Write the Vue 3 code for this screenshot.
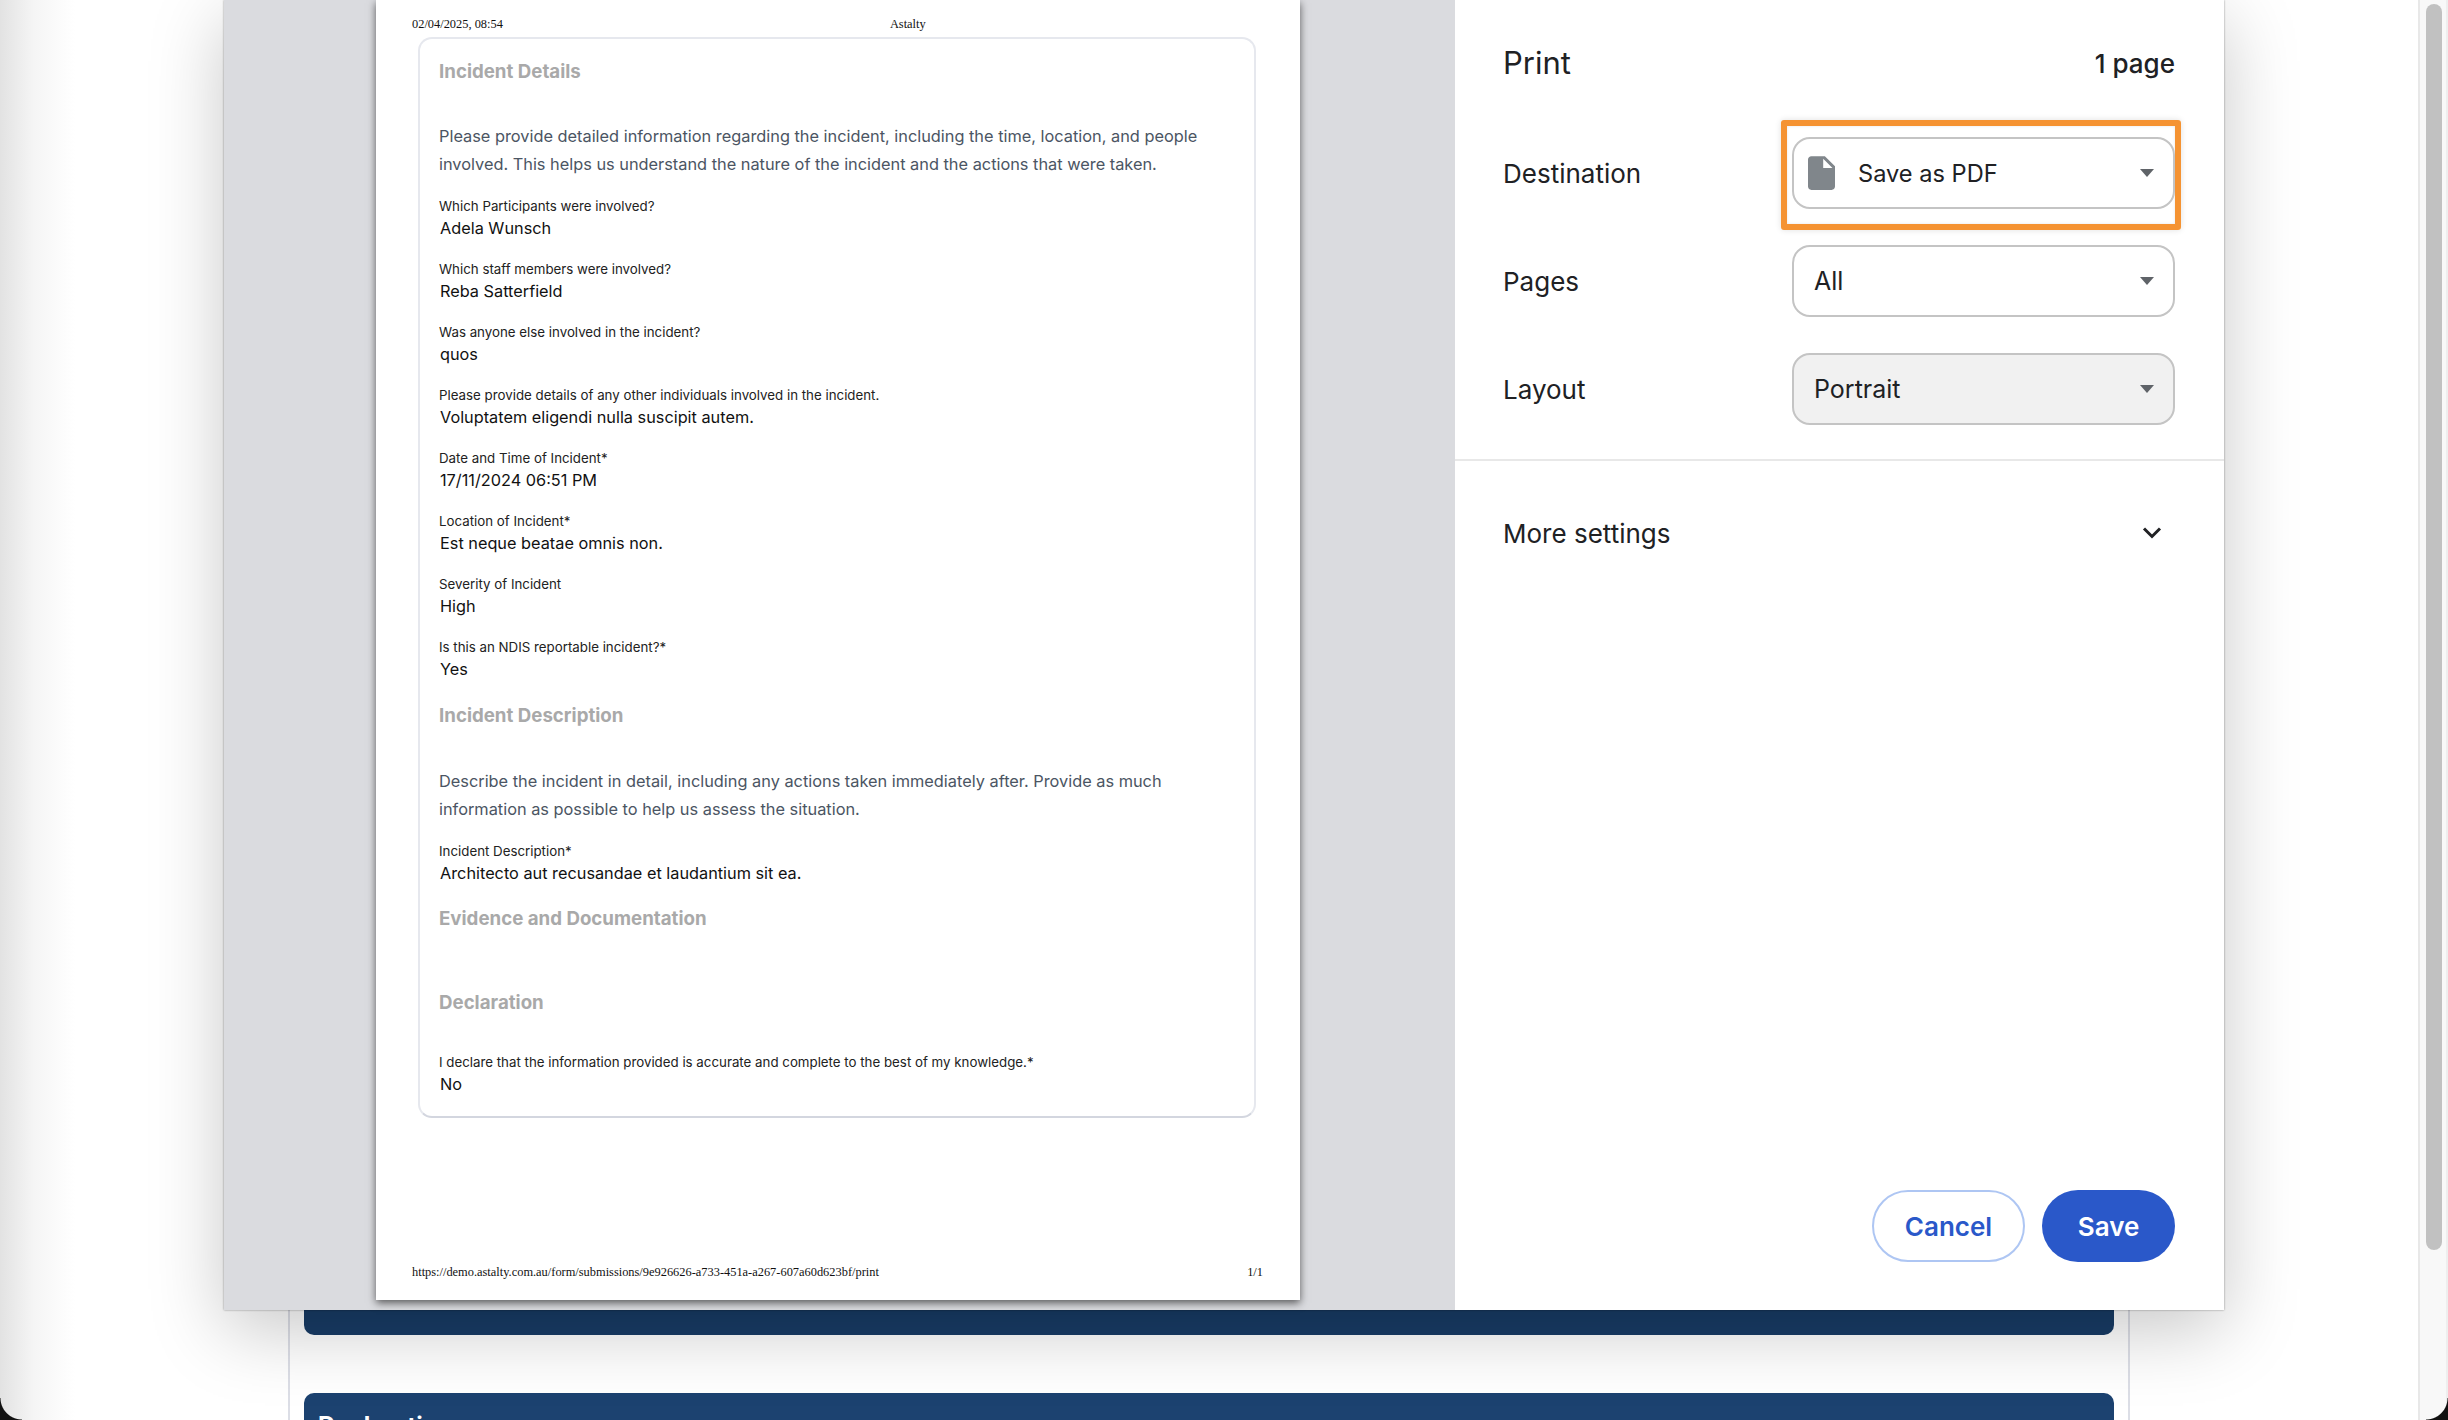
<script setup>
const intro = ['Please provide detailed information regarding the incident, including the time, location, and people', 'involved. This helps us understand the nature of the incident and the actions that were taken.']
const fields = [
  ['Which Participants were involved?', 'Adela Wunsch'],
  ['Which staff members were involved?', 'Reba Satterfield'],
  ['Was anyone else involved in the incident?', 'quos'],
  ['Please provide details of any other individuals involved in the incident.', 'Voluptatem eligendi nulla suscipit autem.'],
  ['Date and Time of Incident*', '17/11/2024 06:51 PM'],
  ['Location of Incident*', 'Est neque beatae omnis non.'],
  ['Severity of Incident', 'High'],
  ['Is this an NDIS reportable incident?*', 'Yes']
]
const settings = [
  { label: 'Pages', value: 'All', cls: '' },
  { label: 'Layout', value: 'Portrait', cls: 'disabled' }
]
</script>

<template>
  <div class="window">
    <div class="backdrop">
      <div class="frame">
        <div class="bar bar-one">Evidence and Documentation</div>
        <div class="bar bar-two">Declaration</div>
      </div>
    </div>
    <div class="edge-shade"></div>

    <div class="dialog">
      <div class="preview">
        <div class="paper">
          <div class="paper-head"><span>02/04/2025, 08:54</span><span class="paper-title">Astalty</span></div>
          <div class="card">
            <h3 class="heading">Incident Details</h3>
            <p class="para para-first"><span v-for="l in intro" :key="l" class="line">{{ l }}</span></p>
            <div v-for="f in fields" :key="f[0]" class="field">
              <div class="label">{{ f[0] }}</div>
              <div class="value">{{ f[1] }}</div>
            </div>
            <h3 class="heading heading-desc">Incident Description</h3>
            <p class="para para-desc"><span class="line">Describe the incident in detail, including any actions taken immediately after. Provide as much</span><span class="line">information as possible to help us assess the situation.</span></p>
            <div class="field field-desc">
              <div class="label">Incident Description*</div>
              <div class="value">Architecto aut recusandae et laudantium sit ea.</div>
            </div>
            <h3 class="heading">Evidence and Documentation</h3>
            <h3 class="heading heading-gap">Declaration</h3>
            <div class="field field-last">
              <div class="label">I declare that the information provided is accurate and complete to the best of my knowledge.*</div>
              <div class="value">No</div>
            </div>
          </div>
          <div class="paper-foot"><span>https://demo.astalty.com.au/form/submissions/9e926626-a733-451a-a267-607a60d623bf/print</span><span>1/1</span></div>
        </div>
      </div>

      <aside class="panel">
        <div class="panel-top">
          <div class="title-row"><span class="title">Print</span><span class="count">1 page</span></div>
          <div class="row row-dest">
            <span class="row-label">Destination</span>
            <div class="highlight">
              <div class="select">
                <svg class="doc" viewBox="4 2 16 20" width="27" height="34"><path fill-rule="evenodd" d="M6 2c-1.1 0-2 .9-2 2v16c0 1.1.9 2 2 2h12c1.1 0 2-.9 2-2V8l-6-6H6zm7 7V3.5L18.5 9H13z" fill="#80868b"/></svg>
                <span class="select-text">Save as PDF</span>
                <span class="caret"></span>
              </div>
            </div>
          </div>
          <div v-for="s in settings" :key="s.label" class="row">
            <span class="row-label">{{ s.label }}</span>
            <div class="select" :class="s.cls">
              <span class="select-plain">{{ s.value }}</span>
              <span class="caret"></span>
            </div>
          </div>
        </div>
        <div class="more">
          <span class="row-label">More settings</span>
          <svg width="20" height="14" viewBox="0 0 20 14"><path d="M2 2.5l8 8 8-8" fill="none" stroke="#202124" stroke-width="3"/></svg>
        </div>
        <div class="actions">
          <button class="btn btn-cancel">Cancel</button>
          <button class="btn btn-save">Save</button>
        </div>
      </aside>
    </div>

    <div class="scrollbar"><div class="thumb"></div></div>
    <div class="corner corner-l"></div>
    <div class="corner corner-r"></div>
  </div>
</template>

<style>
html, body { margin: 0; background: #fff; }
</style>

<style scoped>
.window { position: relative; width: 2448px; height: 1420px; overflow: hidden; background: #fff; font-family: Inter, "Liberation Sans", sans-serif; }
.backdrop { height: 100%; padding-left: 288px; box-sizing: border-box; }
.frame { width: 1842px; height: 100%; box-sizing: border-box; border-left: 2px solid #dcdee6; border-right: 2px solid #dcdee6; padding: 1200px 14px 0; }
.bar { color: #fff; font-weight: 700; font-size: 24px; padding-left: 14px; overflow: hidden; box-sizing: border-box; white-space: nowrap; }
.bar-one { height: 135px; background: #183c66; padding-top: 83px; border-radius: 0 0 10px 10px; }
.bar-two { height: 60px; margin-top: 58px; background: #1c4270; padding-top: 18px; border-radius: 10px 10px 0 0; }
.edge-shade { position: absolute; left: 0; top: 0; bottom: 0; width: 75px; background: linear-gradient(90deg, #e2e2e2, #f5f5f5 45%, #fff); }

.dialog { position: absolute; left: 224px; top: 0; width: 2000px; height: 1310px; display: flex; box-shadow: 0 0 2px rgba(0,0,0,.4), 0 20px 70px rgba(0,0,0,.22); }
.preview { width: 1231px; background: #dadbdf; padding-left: 152px; box-sizing: border-box; }
.paper { width: 924px; height: 1300px; background: #fff; box-shadow: 0 3px 8px rgba(0,0,0,.6); display: flex; flex-direction: column; padding: 0 37px 0 36px; box-sizing: border-box; position: relative; }
.paper-head { display: flex; height: 37px; align-items: center; padding-top: 11px; box-sizing: border-box; font: 12.4px/1 "Liberation Serif", serif; color: #111; }
.paper-title { margin-left: 387px; }
.paper-foot { margin-top: auto; margin-bottom: 21px; display: flex; justify-content: space-between; font: 12.4px/14px "Liberation Serif", serif; color: #111; }
.card { margin-left: 6px; width: 838px; height: 1081px; box-sizing: border-box; border: 2px solid #e6e8ee; border-bottom-color: #d3d6df; border-radius: 14px; padding: 19px 19px 0; }
.heading { margin: 0; font-size: 18.7px; line-height: 28px; font-weight: 700; color: #a9a9a9; white-space: nowrap; }
.heading-desc { margin-top: 22px; }
.heading-gap { margin-top: 56px; }
.para { margin: 36px 0 17px; font-size: 16.33px; line-height: 28px; color: #4b5563; }
.para-desc { margin-top: 36.5px; }
.line { display: block; white-space: nowrap; }
.field { margin-bottom: 19px; }
.field-desc { margin-bottom: 21px; }
.field-last { margin-top: 34.5px; margin-bottom: 0; }
.label { font-size: 13.3px; line-height: 22px; color: #222; white-space: nowrap; }
.value { font-size: 16.3px; line-height: 22px; color: #111; padding-left: 1px; white-space: nowrap; }

.panel { flex: 1; background: #fff; display: flex; flex-direction: column; position: relative; }
.panel-top { padding: 0 49px 0 48px; height: 461px; box-sizing: border-box; border-bottom: 2px solid #e8e8e8; }
.title-row { display: flex; justify-content: space-between; align-items: center; height: 120px; padding-top: 4px; box-sizing: border-box; }
.title { font-size: 31px; color: #202124; }
.count { font-size: 26px; font-weight: 500; color: #202124; padding-top: 3px; }
.row { display: flex; align-items: center; justify-content: space-between; height: 72px; margin-bottom: 36px; }
.row-dest { height: 110px; margin-bottom: 15px; padding-bottom: 4px; box-sizing: border-box; position: relative; }
.row-label { font-size: 26px; color: #202124; }
.highlight { position: absolute; right: -6px; top: 0; width: 400px; height: 110px; box-sizing: border-box; border: 6px solid #f59332; border-radius: 3px; display: flex; align-items: center; justify-content: flex-end; padding-bottom: 4px; box-shadow: 0 0 6px rgba(0,0,0,.12), inset 0 0 3px rgba(0,0,0,.1); }
.select { width: 383px; height: 72px; box-sizing: border-box; border: 2px solid #c4c4c4; border-radius: 18px; display: flex; align-items: center; padding: 0 19px 0 14px; color: #202124; font-size: 25px; background: #fff; }
.disabled { background: #f1f1f1; }
.doc { margin-right: 23px; flex: none; }
.select-text { font-size: 23.6px; }
.select-plain { padding-left: 6px; }
.caret { margin-left: auto; width: 0; height: 0; border-left: 7px solid transparent; border-right: 7px solid transparent; border-top: 8px solid #5f6368; }
.more { display: flex; align-items: center; justify-content: space-between; padding: 0 62px 0 48px; height: 100px; margin-top: 23px; position: relative; top: -1px; }
.actions { margin-top: auto; margin-bottom: 48px; margin-right: 49px; display: flex; justify-content: flex-end; gap: 17px; }
.btn { height: 72px; border-radius: 36px; font: 600 26px Inter, "Liberation Sans", sans-serif; box-sizing: border-box; }
.btn-cancel { width: 153px; background: #fff; border: 2px solid #aec6f3; color: #2a58c9; }
.btn-save { width: 133px; background: #2a58c9; border: none; color: #fff; }

.scrollbar { position: absolute; right: 0; top: 0; bottom: 0; width: 30px; box-sizing: border-box; background: #f8f8f8; border-left: 2px solid #e8e8e8; border-right: 2px solid #eee; padding: 4px 4px 0 6px; }
.thumb { width: 16px; height: 1246px; background: #c1c1c1; border-radius: 8px; }
.corner { position: absolute; bottom: 0; width: 22px; height: 22px; }
.corner-l { left: 0; background: radial-gradient(circle at 100% 0, transparent 21px, #111 22px); }
.corner-r { right: 0; background: radial-gradient(circle at 0 0, transparent 21px, #111 22px); }
</style>
